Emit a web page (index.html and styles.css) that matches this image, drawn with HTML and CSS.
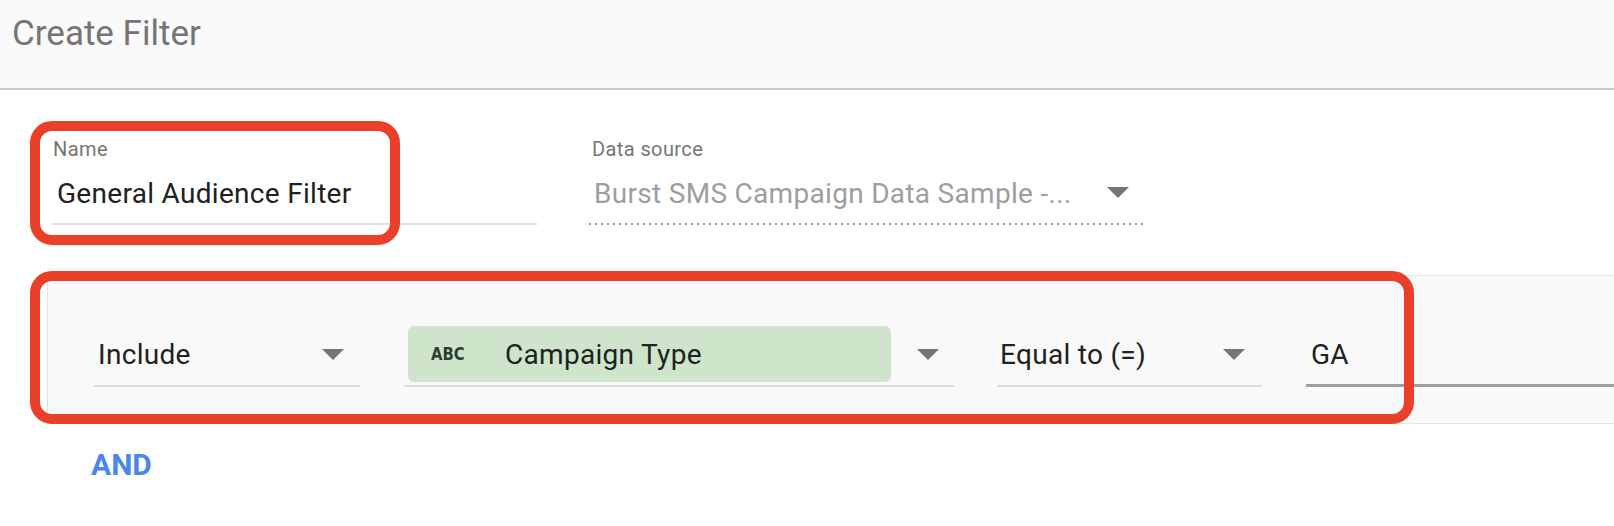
FILE: index.html
```html
<!DOCTYPE html>
<html>
<head>
<meta charset="utf-8">
<link rel="stylesheet" href="styles.css">
</head>
<body>
<div class="header"><div class="title">Create Filter</div></div>
<div class="content">
  <div class="fields">
    <div class="field name-field">
      <div class="label">Name</div>
      <div class="value">General Audience Filter</div>
    </div>
    <div class="field source-field">
      <div class="label">Data source</div>
      <div class="value muted">Burst SMS Campaign Data Sample -...<span class="arrow"></span></div>
    </div>
  </div>
  <div class="panel">
    <div class="sel sel-include"><span class="txt">Include</span><span class="arrow"></span></div>
    <div class="sel sel-dim"><span class="chip"><span class="abc">ABC</span><span class="txt">Campaign Type</span></span><span class="arrow"></span></div>
    <div class="sel sel-op"><span class="txt">Equal to (=)</span><span class="arrow"></span></div>
    <div class="sel sel-val"><span class="txt">GA</span></div>
  </div>
  <div class="and">AND</div>
</div>
<div class="mark mark-name"></div>
<div class="mark mark-filter"></div>
</body>
</html>
```
FILE: styles.css
```css
html, body { margin: 0; padding: 0; background: #fff; }
body { font-family: Roboto, "Noto Sans", sans-serif; position: relative; width: 1614px; height: 526px; overflow: hidden; }
.header { height: 88px; background: #fafafa; border-bottom: 2px solid #cbcbcb; }
.title { padding: 14px 0 0 12px; font-size: 35px; line-height: 40px; color: #757575; }
.content { padding-top: 47px; }
.fields { display: flex; gap: 52px; padding-left: 52px; }
.field { display: flex; flex-direction: column; }
.name-field { width: 485px; border-bottom: 2px solid #e0e0e0; }
.source-field { width: 556px; padding-bottom: 3px; background: linear-gradient(to right, #9a9a9a 2px, transparent 2px) left bottom / 6px 2px repeat-x; }
.label { font-size: 20px; line-height: 24px; letter-spacing: 0.4px; color: #757575; padding-left: 1px; }
.source-field .label { padding-left: 3px; }
.value { display: flex; align-items: center; font-size: 28px; line-height: 34px; letter-spacing: 0.3px; margin-top: 16px; padding: 0 0 12px 5px; color: #212121; }
.source-field .value { padding: 0 16px 9px 5px; }
.muted { color: #9e9e9e; }
.value .arrow { margin-left: auto; margin-top: -4px; }
.arrow { width: 0; height: 0; border-left: 11.5px solid transparent; border-right: 11.5px solid transparent; border-top: 11px solid #757575; flex: none; }
.panel { margin: 50px 0 0 47px; background: #f9f9f9; border-top: 1px solid #e4e4e4; border-left: 1px solid #e4e4e4; border-bottom: 1px solid #e4e4e4; height: 149px; box-sizing: border-box; display: flex; align-items: flex-start; padding: 50px 0 0 46px; gap: 44px; }
.sel { display: flex; align-items: center; height: 56px; padding-bottom: 3px; border-bottom: 2px solid #dedede; font-size: 28px; letter-spacing: 0.3px; color: #212121; flex: none; }
.sel .arrow { margin-left: auto; }
.sel-include { width: 266px; padding-left: 4px; padding-right: 16px; box-sizing: border-box; height: 61px; }
.sel-dim { width: 550px; padding-left: 4px; padding-right: 15px; box-sizing: border-box; height: 61px; margin-right: -1px; }
.chip { display: flex; align-items: center; width: 483px; height: 56px; background: #cee5cb; border-radius: 6px; }
.abc { font-family: "DejaVu Sans Condensed", "DejaVu Sans", sans-serif; font-weight: bold; font-size: 16.5px; letter-spacing: 0; color: #2f3d30; margin-left: 23px; width: 74px; flex: none; transform: scaleY(1.05); }
.sel-op { width: 265px; padding-left: 3px; padding-right: 17px; box-sizing: border-box; height: 61px; }
.sel-val { flex: 1; padding-left: 5px; box-sizing: border-box; height: 61px; padding-bottom: 2px; border-bottom: 3px solid #9e9e9e; }
.and { margin: 23px 0 0 91px; font-size: 30px; line-height: 36px; font-weight: bold; color: #4b87ea; }
.mark { position: absolute; border: 10px solid #ea4029; border-radius: 22px; box-sizing: border-box; }
.mark-name { left: 30px; top: 121px; width: 370px; height: 124px; }
.mark-filter { left: 30px; top: 271px; width: 1384px; height: 153px; }
```
